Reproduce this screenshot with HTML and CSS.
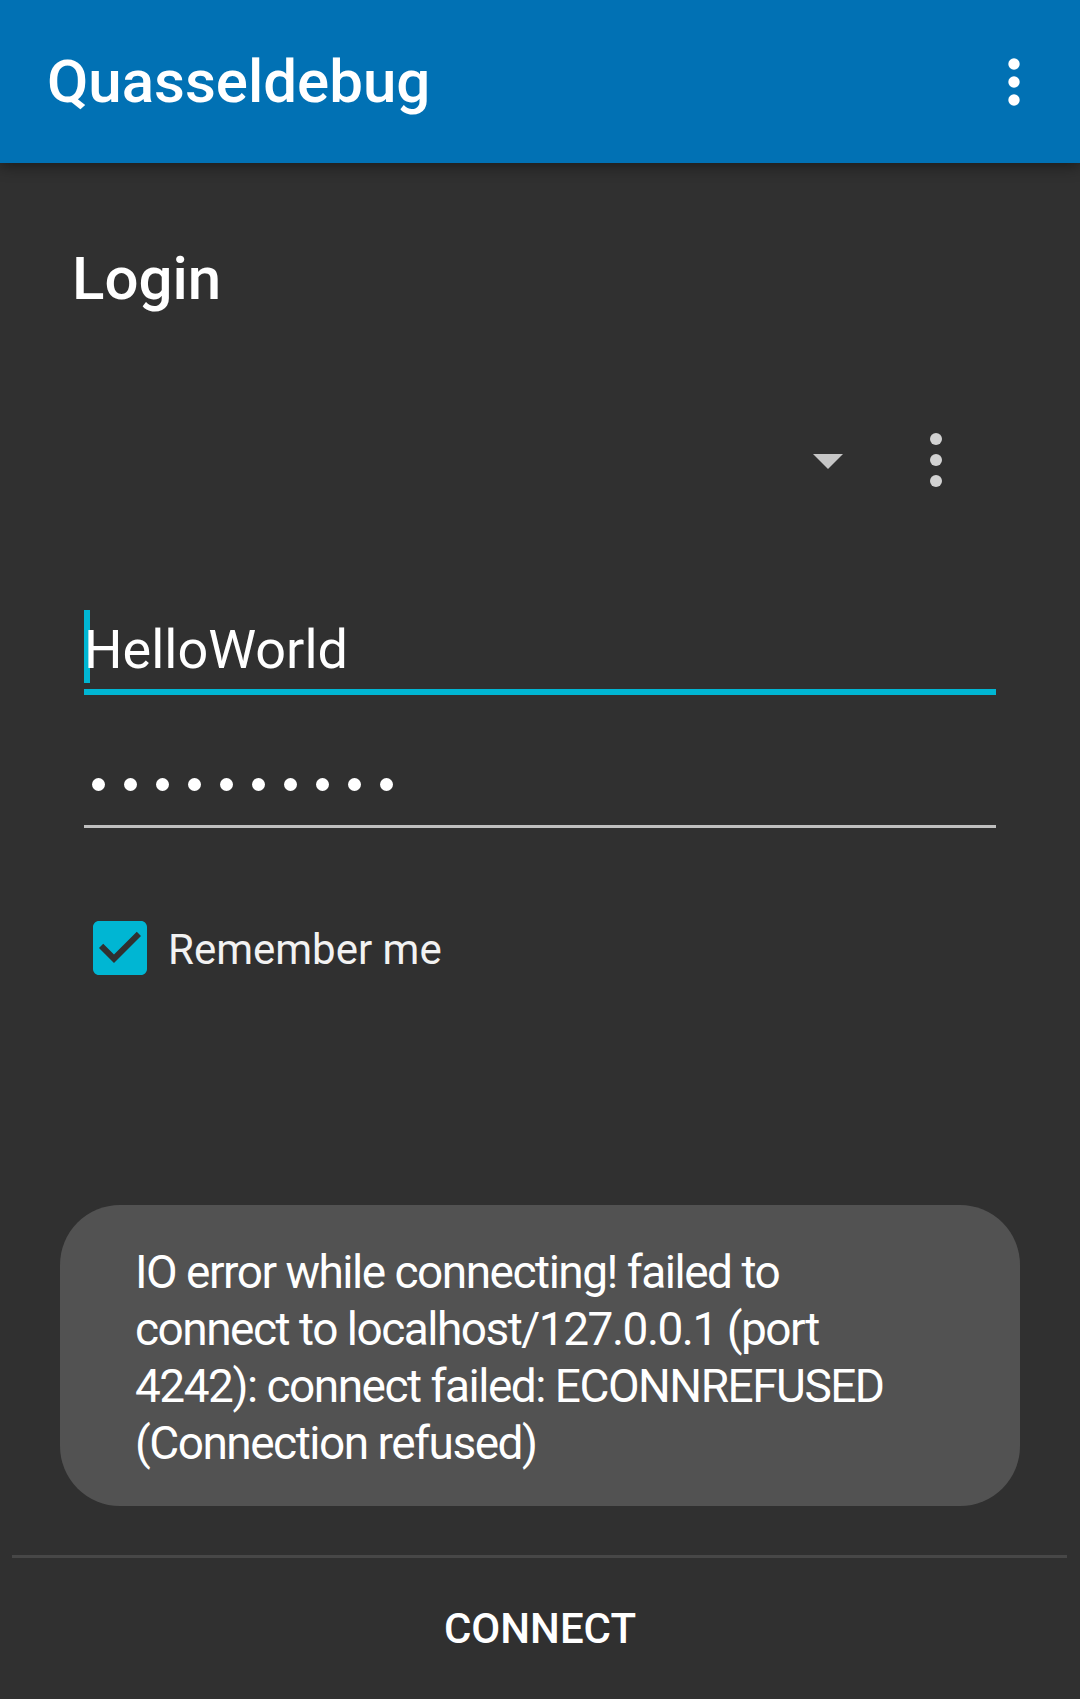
FILE: index.html
```html
<!DOCTYPE html>
<html lang="en">
<head>
<meta charset="utf-8">
<title>Quasseldebug</title>
<link rel="stylesheet" href="styles.css">
</head>
<body>
<header class="appbar">
  <h1 class="appbar-title">Quasseldebug</h1>
  <svg class="appbar-menu" viewBox="0 0 24 24" aria-label="More options">
    <circle cx="12" cy="6" r="1.9" fill="#ffffff"/>
    <circle cx="12" cy="12" r="1.9" fill="#ffffff"/>
    <circle cx="12" cy="18" r="1.9" fill="#ffffff"/>
  </svg>
</header>

<main class="content">
  <h2 class="login-title">Login</h2>

  <div class="form">
    <div class="account-row">
      <span class="spinner-arrow"></span>
      <svg class="account-menu" viewBox="0 0 12 54" aria-label="Account options">
        <circle cx="6" cy="6" r="6" fill="#d2d2d2"/>
        <circle cx="6" cy="27" r="6" fill="#d2d2d2"/>
        <circle cx="6" cy="48" r="6" fill="#d2d2d2"/>
      </svg>
    </div>

    <div class="field field-focused"><span class="field-text">HelloWorld</span></div>

    <div class="field field-password" aria-label="Password">
      <span class="pw-dot"></span><span class="pw-dot"></span><span class="pw-dot"></span><span class="pw-dot"></span><span class="pw-dot"></span><span class="pw-dot"></span><span class="pw-dot"></span><span class="pw-dot"></span><span class="pw-dot"></span><span class="pw-dot"></span>
    </div>

    <label class="checkbox-row">
      <svg class="checkbox" viewBox="0 0 24 24">
        <path fill="#00b6d3" fill-rule="evenodd" d="M19 3H5c-1.11 0-2 .9-2 2v14c0 1.1.89 2 2 2h14c1.11 0 2-.9 2-2V5c0-1.1-.89-2-2-2zm-9 14l-5-5 1.41-1.41L10 14.170l7.590-7.590L19 8l-9 9z"/>
      </svg>
      <span class="checkbox-label">Remember me</span>
    </label>
  </div>

  <div class="toast">IO error while connecting! failed to<br>connect to localhost/127.0.0.1 (port<br>4242): connect failed: ECONNREFUSED<br>(Connection refused)</div>
</main>

<footer class="footer">
  <div class="divider"></div>
  <div class="connect">CONNECT</div>
</footer>
</body>
</html>
```

FILE: styles.css
```css
* {
  box-sizing: border-box;
}

html, body {
  margin: 0;
  padding: 0;
}

body {
  width: 1080px;
  height: 1699px;
  background: #303030;
  font-family: Roboto, "Noto Sans", "Liberation Sans", sans-serif;
  color: #ffffff;
  display: flex;
  flex-direction: column;
  overflow: hidden;
}

.appbar {
  position: relative;
  z-index: 2;
  height: 163px;
  flex: 0 0 163px;
  background: #0171b4;
  display: flex;
  align-items: center;
  padding: 0 30px 0 47px;
  box-shadow: 0 3px 14px rgba(0, 0, 0, 0.45);
}

.appbar-title {
  margin: 0;
  font-size: 60px;
  font-weight: 500;
  line-height: 70px;
  flex: 1;
  color: #ffffff;
}

.appbar-menu {
  width: 72px;
  height: 72px;
  display: block;
}

.content {
  flex: 1;
  display: flex;
  flex-direction: column;
}

.login-title {
  margin: 81px 0 0 72px;
  font-size: 60px;
  font-weight: 500;
  line-height: 70px;
  color: #ffffff;
}

.form {
  margin: 0 84px;
  display: flex;
  flex-direction: column;
}

.account-row {
  margin-top: 98px;
  height: 96px;
  display: flex;
  align-items: center;
  justify-content: flex-end;
  padding-right: 54px;
}

.spinner-arrow {
  width: 0;
  height: 0;
  border-left: 15px solid transparent;
  border-right: 15px solid transparent;
  border-top: 15px solid #c6c6c6;
  margin-right: 87px;
  margin-top: 3px;
}

.account-menu {
  width: 12px;
  height: 54px;
  display: block;
}

.field {
  display: flex;
  align-items: center;
}

.field-focused {
  margin-top: 102px;
  height: 85px;
  padding-bottom: 6px;
  border-bottom: 6px solid #00b6d3;
  align-items: flex-start;
}

.field-text {
  display: block;
  font-size: 54px;
  line-height: 79px;
  height: 73px;
  color: #ffffff;
}

.field-text::before {
  content: "";
  display: inline-block;
  width: 6px;
  height: 73px;
  vertical-align: top;
  margin-right: -6px;
  background: #00b6d3;
}

.field-password {
  margin-top: 53px;
  height: 80px;
  padding: 0 0 5px 8px;
  border-bottom: 3px solid #bfbfbf;
  gap: 19px;
}

.pw-dot {
  width: 13px;
  height: 13px;
  border-radius: 50%;
  background: #ffffff;
}

.checkbox-row {
  margin-top: 84px;
  height: 72px;
  display: flex;
  align-items: center;
  gap: 12px;
}

.checkbox {
  width: 72px;
  height: 72px;
  display: block;
}

.checkbox-label {
  font-size: 42px;
  line-height: 49px;
  color: #f2f2f2;
  padding-top: 3px;
}

.toast {
  margin: 221px 60px 0 60px;
  height: 301px;
  border-radius: 60px;
  background: #525252;
  padding: 39px 40px 0 75px;
  font-size: 46px;
  line-height: 57px;
  letter-spacing: -1.5px;
  color: #ffffff;
}

.footer {
  flex: 0 0 144px;
  display: flex;
  flex-direction: column;
}

.divider {
  height: 3px;
  margin: 0 13px 0 12px;
  background: #474747;
}

.connect {
  flex: 1;
  display: flex;
  align-items: center;
  justify-content: center;
  font-size: 42px;
  font-weight: 500;
  color: #ffffff;
}
```
